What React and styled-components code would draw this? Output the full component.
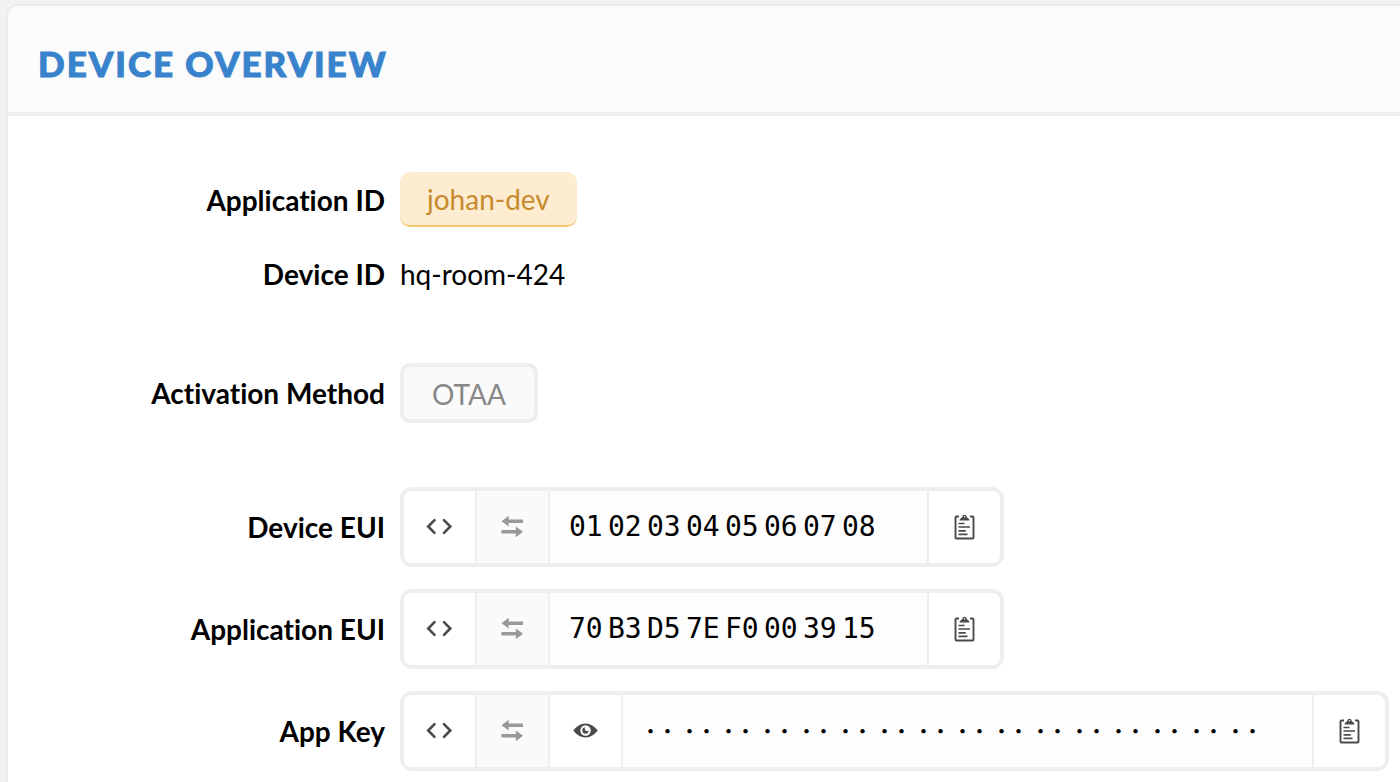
import React from 'react'
import styled, {createGlobalStyle} from 'styled-components'

const GlobalStyle = createGlobalStyle`
   * {
      box-sizing:border-box;
   }

   body {
      margin:0;
      background:#f2f2f2;
      color:#000;
      font-family:Lato, "Open Sans", sans-serif;
      font-size:28px;
      line-height:34px;
      font-variant-ligatures:none;
   }
`

const Panel = styled.section`
   min-height:calc(100vh - 4px);
   margin:4px 0 0 6px;
   border:solid #ebebeb;
   border-width:2px 0 0 2px;
   border-radius:12px 0 0 0;
   background:#fff;
   overflow:hidden;
`

const PanelHeader = styled.header`
   padding:35px 30px 27px;
   background:#fbfbfb;
   border-bottom:4px solid #eee;
`

const Title = styled.h1`
   margin:0;
   color:#3883cc;
   font-size:35px;
   font-weight:900;
   line-height:44px;
   letter-spacing:2px;
   text-transform:uppercase;
   -webkit-text-stroke:1px #3883cc;
`

const PanelBody = styled.div`
   display:flex;
   flex-direction:column;
   gap:64px;
   padding-top:56px;
`

const Fields = styled.dl`
   display:flex;
   flex-direction:column;
   gap:22px;
   margin:0;
`

const Field = styled.div`
   display:grid;
   grid-template-columns:377px 1fr;
   column-gap:15px;
   align-items:center;
   min-height:50px;
`

const Label = styled.dt`
   font-weight:700;
   text-align:right;
`

const Value = styled.dd`
   display:flex;
   margin:0;
`

const AppLink = styled.a`
   padding:10px 27px 9px;
   border-bottom:2px solid #f5c871;
   border-radius:10px;
   background:#fdecd0;
   color:#c88a2c;
   text-decoration:none;
`

const Method = styled.span`
   padding:10px 28px 8px;
   border:4px solid #eee;
   border-radius:10px;
   background:#fafafa;
   color:#888;
`

const Group = styled.div`
   display:flex;
   height:80px;
   border:4px solid #eee;
   border-radius:12px;
   background:#fff;
   overflow:hidden;
`

const IconButton = styled.button`
   display:flex;
   align-items:center;
   justify-content:center;
   width:73px;
   padding:0;
   border:solid #eee;
   border-width:${({$last}) => $last ? '0 0 0 2px' : '0 2px 0 0'};
   background:${({$muted}) => $muted ? '#fafafa' : '#fff'};
   color:${({$muted}) => $muted ? '#999' : '#4a4a4a'};
   cursor:pointer;
`

const Bytes = styled.code`
   display:flex;
   align-items:center;
   gap:6px;
   padding:0 52px 0 19px;
   background:#fdfdfd;
   font-family:"DejaVu Sans Mono", monospace;
   font-size:28px;
`

const Byte = styled.span`
   width:33px;
   white-space:nowrap;
`

const HiddenByte = styled(Byte)`
   font-family:"Noto Sans CJK SC", sans-serif;
   font-size:17px;
   font-weight:700;
`

const CodeIcon = () => (
   <svg width="28" height="28" viewBox="0 0 28 28" fill="none" stroke="currentColor" strokeWidth="2.6" strokeLinecap="round">
      <path d="M8.500 7.200 2.200 13.500 8.500 19.800M18 7.200l6.300 6.300L18 19.800" />
   </svg>
)

const SwapIcon = () => (
   <svg width="24" height="24" viewBox="0 0 24 24" fill="currentColor">
      <path d="M.5 6.200 7.700.8V4.500H22V8H7.700V11.600zM22 16.800 14.800 11.400V15H.5V18.500H14.800V22.200z" />
   </svg>
)

const EyeIcon = () => (
   <svg width="26" height="26" viewBox="0 0 26 26" fill="currentColor">
      <path d="M12.500 5.500C7.500 5.500 3.500 8.500 .3 12.500 3.500 16.500 7.500 19.500 12.500 19.500s9-3 12.200-7C21.500 8.500 17.500 5.500 12.500 5.500z" />
      <circle cx="12.500" cy="12.500" r="5.200" fill="#fff" />
      <path d="M12 9.300a3.200 3.200 0 1 0 3.700 3.200c-1 .8-2.400.8-3.200 0s-1-2-.5-3.200z" />
   </svg>
)

const ClipboardIcon = () => (
   <svg width="22" height="26" viewBox="0 0 22 26" fill="none" stroke="currentColor">
      <path d="M5 2.500H2.500a1 1 0 0 0-1 1V23.500a1 1 0 0 0 1 1H18.500a1 1 0 0 0 1-1V3.500a1 1 0 0 0-1-1H16" strokeWidth="1.9" />
      <path d="M5.500 6.500C5.500 4.300 7.300 4.500 8.300 3 8.500 0 12.500 0 12.700 3 13.700 4.500 15.500 4.300 15.500 6.500z" fill="currentColor" stroke="none" />
      <circle cx="10.500" cy="2.700" r=".7" fill="#fff" stroke="none" />
      <path d="M4.500 9.500H10.500M4.500 13H16M4.500 16.800H11.800M4.500 20.300H13.500" strokeWidth="1.700" />
   </svg>
)

const HexField = ({label, bytes, secret}) => (
   <Field>
      <Label>{label}</Label>
      <Value>
         <Group>
            <IconButton type="button" aria-label={`Toggle ${label} format`}><CodeIcon /></IconButton>
            <IconButton type="button" aria-label={`Swap ${label} byte order`} $muted><SwapIcon /></IconButton>
            {secret && (
               <IconButton type="button" aria-label={`Show ${label}`}><EyeIcon /></IconButton>
            )}
            <Bytes>
               {bytes.map((byte, i) => (
                  secret ? <HiddenByte key={i} lang="zh-CN">{byte}</HiddenByte> : <Byte key={i}>{byte}</Byte>
               ))}
            </Bytes>
            <IconButton type="button" aria-label={`Copy ${label}`} $last><ClipboardIcon /></IconButton>
         </Group>
      </Value>
   </Field>
)

const deviceEui = '01 02 03 04 05 06 07 08'.split(' ')
const appEui = '70 B3 D5 7E F0 00 39 15'.split(' ')
const appKey = Array(16).fill('··')

const App = () => (
   <>
      <GlobalStyle />
      <Panel>
         <PanelHeader>
            <Title>Device Overview</Title>
         </PanelHeader>
         <PanelBody>
            <Fields>
               <Field>
                  <Label>Application ID</Label>
                  <Value><AppLink href="#johan-dev">johan-dev</AppLink></Value>
               </Field>
               <Field>
                  <Label>Device ID</Label>
                  <Value>hq-room-424</Value>
               </Field>
            </Fields>
            <Fields>
               <Field>
                  <Label>Activation Method</Label>
                  <Value><Method>OTAA</Method></Value>
               </Field>
            </Fields>
            <Fields>
               <HexField label="Device EUI" bytes={deviceEui} />
               <HexField label="Application EUI" bytes={appEui} />
               <HexField label="App Key" bytes={appKey} secret />
            </Fields>
         </PanelBody>
      </Panel>
   </>
)

export default App
